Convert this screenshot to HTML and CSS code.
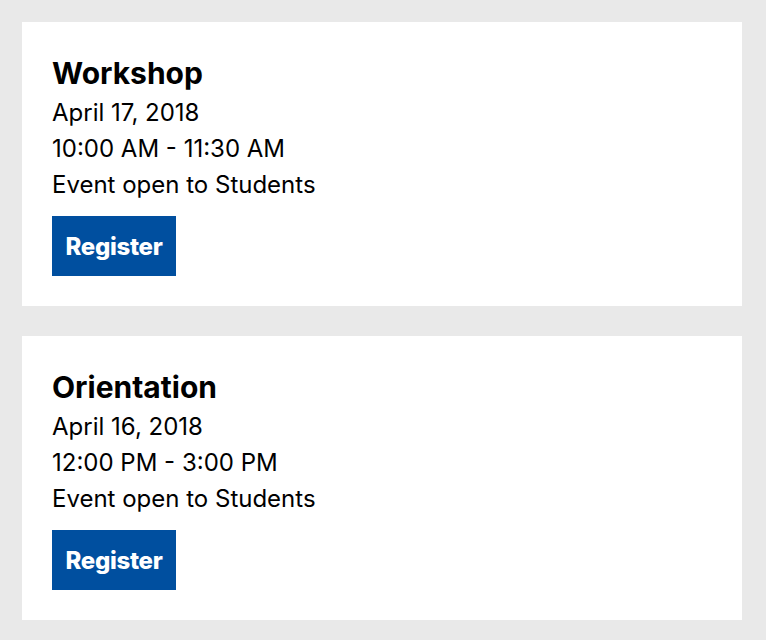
FILE: index.html
```html
<!DOCTYPE html>
<html lang="en">
<head>
<meta charset="utf-8">
<title>Events</title>
<link rel="stylesheet" href="styles.css">
</head>
<body>
<main class="events">
  <section class="card">
    <h2 class="card-title">Workshop</h2>
    <p class="card-line">April 17, 2018</p>
    <p class="card-line">10:00 AM - 11:30 AM</p>
    <p class="card-line">Event open to Students</p>
    <a class="btn" href="#">Register</a>
  </section>
  <section class="card">
    <h2 class="card-title">Orientation</h2>
    <p class="card-line">April 16, 2018</p>
    <p class="card-line">12:00 PM - 3:00 PM</p>
    <p class="card-line">Event open to Students</p>
    <a class="btn" href="#">Register</a>
  </section>
</main>
</body>
</html>
```
FILE: styles.css
```css
html, body {
  margin: 0;
  padding: 0;
  background: #e9e9e9;
}
body {
  font-family: Inter, "Liberation Sans", sans-serif;
  color: #000;
}
.events {
  display: flex;
  flex-direction: column;
  gap: 30px;
  padding: 22px 24px 20px 22px;
}
.card {
  background: #fff;
  padding: 30px;
  display: flex;
  flex-direction: column;
  align-items: flex-start;
}
.card-title {
  margin: 0;
  font-size: 30px;
  font-weight: 700;
  line-height: 43px;
}
.card-line {
  margin: 0;
  font-size: 24px;
  line-height: 36px;
}
.btn {
  margin-top: 13px;
  display: flex;
  align-items: center;
  justify-content: center;
  width: 124px;
  height: 60px;
  background: #004f9f;
  color: #fff;
  font-weight: 800;
  font-size: 24px;
  letter-spacing: -0.3px;
  text-decoration: none;
}
```
